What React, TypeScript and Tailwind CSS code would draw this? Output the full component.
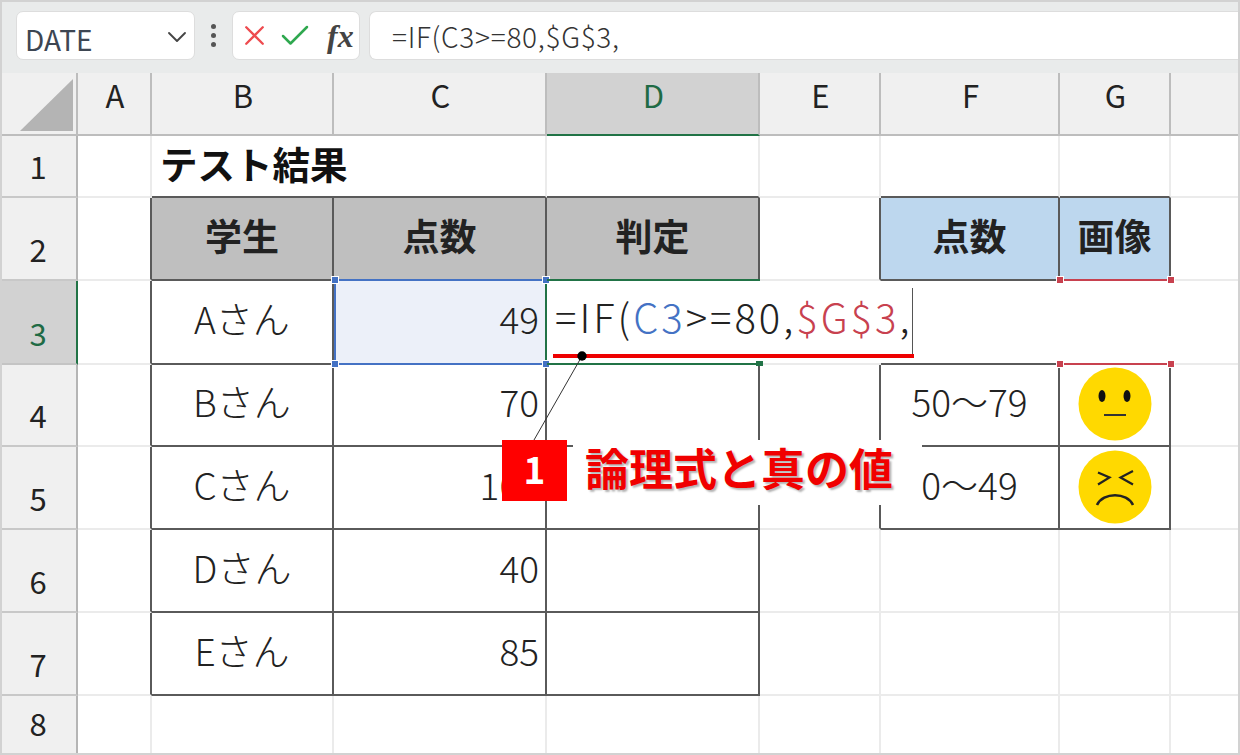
import type { ReactNode } from "react";
import { ChevronDown, Check, X } from "lucide-react";

const LIGHT = "border-r-2 border-b-2 border-[#ebebeb]";
const DARK = "border-r-2 border-b-2 border-[#5a5a5a]";
const BODY = "font-light pb-[6px]";

function ColHead({ label, active }: { label: string; active?: boolean }) {
  return (
    <div
      className={`flex items-center justify-center pl-[2px] pb-[16px] text-[31px] border-r-2 border-b-2 ${
        active
          ? "bg-[#d2d2d2] text-[#1f6b45] border-r-[#bdbdbd] border-b-[#217346]"
          : "bg-[#f0f0f0] text-[#222] border-[#bdbdbd]"
      }`}
    >
      {label}
    </div>
  );
}

function RowHead({ label, active }: { label: string; active?: boolean }) {
  return (
    <div
      className={`flex items-end justify-center pb-[10px] text-[31px] leading-[40px] border-b-2 border-r-2 ${
        active
          ? "bg-[#d2d2d2] text-[#1f6b45] border-b-[#c4c4c4] border-r-[#217346]"
          : "bg-[#f0f0f0] text-[#222] border-b-[#c8c8c8] border-r-[#b5b5b5]"
      }`}
    >
      {label}
    </div>
  );
}

function Cell({ className = LIGHT, children }: { className?: string; children?: ReactNode }) {
  return <div className={`flex items-center text-[37px] text-[#222] ${className}`}>{children}</div>;
}

function Handle({ className }: { className: string }) {
  return <span className={`absolute w-[8px] h-[8px] border border-white ${className}`} />;
}

function NeutralFace() {
  return (
    <svg className="-mt-[2px]" width="76" height="74" viewBox="0 0 76 74">
      <circle cx="38" cy="37" r="36.5" fill="#ffd900" />
      <ellipse cx="25" cy="29" rx="3.5" ry="6" fill="#111" />
      <ellipse cx="50" cy="29" rx="3.5" ry="6" fill="#111" />
      <path d="M27 48 H49" stroke="#333" strokeWidth="2" />
    </svg>
  );
}

function SadFace() {
  return (
    <svg className="-mt-[2px]" width="76" height="74" viewBox="0 0 76 74">
      <circle cx="38" cy="37" r="36.5" fill="#ffd900" />
      <path d="M21 22.5 L32.5 27.5 L21 34.5" fill="none" stroke="#222" strokeWidth="2.2" />
      <path d="M56 21 L43.5 27.5 L56 34.5" fill="none" stroke="#222" strokeWidth="2.2" />
      <path d="M20 55 C26 42 50 42 56 55" fill="none" stroke="#222" strokeWidth="2.6" />
    </svg>
  );
}

const rows = [
  { no: "4", name: "Bさん", score: "70", range: "50〜79", face: <NeutralFace /> },
  { no: "5", name: "Cさん", score: "100", range: "0〜49", face: <SadFace /> },
  { no: "6", name: "Dさん", score: "40" },
  { no: "7", name: "Eさん", score: "85" },
];

export default function App() {
  return (
    <div
      className="relative w-[1240px] h-[755px] overflow-hidden bg-white"
      style={{ fontFamily: '"Noto Sans CJK JP", "Noto Sans", sans-serif' }}
    >
      {/* formula bar */}
      <div className="flex h-[73px] items-center gap-[9px] pl-[16px] pb-[2px] bg-[#e9ebeb]">
        <div className="flex w-[179px] h-[49px] items-center justify-between pl-[8px] pr-[1px] bg-white rounded-[7px] border border-[#dddddd] text-[28px] text-[#3d4652]">
          <span className="pt-[6px]">DATE</span>
          <ChevronDown size={32} strokeWidth={1.4} color="#444" className="mt-[3px]" />
        </div>
        <div className="flex flex-col gap-[4px] w-[10px] ml-[4px] mr-[5px] items-center">
          <span className="w-[5px] h-[5px] rounded-full bg-[#555]" />
          <span className="w-[5px] h-[5px] rounded-full bg-[#555]" />
          <span className="w-[5px] h-[5px] rounded-full bg-[#555]" />
        </div>
        <div className="flex w-[128px] h-[49px] items-center pl-[5px] bg-white rounded-[7px] border border-[#dddddd]">
          <X size={33} strokeWidth={1.7} color="#ee4b4f" />
          <Check size={36} strokeWidth={1.7} color="#2fa84f" className="ml-[6px]" />
          <span
            className="ml-[14px] text-[32px] font-bold italic text-[#444]"
            style={{ fontFamily: '"Liberation Serif", serif' }}
          >
            fx
          </span>
        </div>
        <div className="flex flex-1 h-[49px] items-center pl-[22px] bg-white rounded-l-[7px] border border-r-0 border-[#dddddd] text-[28px] tracking-[0.7px] font-light text-[#333]">
          =IF(C3&gt;=80,$G$3,
        </div>
      </div>

      {/* sheet */}
      <div className="grid grid-cols-[78px_74px_182px_213px_213px_121px_179px_111px_69px] grid-rows-[63px_62px_83px_84px_82px_83px_83px_83px_59px]">
        <div className="flex items-end justify-end pr-[2px] pb-[3px] bg-[#f0f0f0] border-r-2 border-b-2 border-[#bdbdbd]">
          <svg width="54" height="52" viewBox="0 0 54 52">
            <path d="M53 0 V52 H0 Z" fill="#b4b4b4" />
          </svg>
        </div>
        <ColHead label="A" />
        <ColHead label="B" />
        <ColHead label="C" />
        <ColHead label="D" active />
        <ColHead label="E" />
        <ColHead label="F" />
        <ColHead label="G" />
        <div className="bg-[#f0f0f0] border-b-2 border-[#bdbdbd]" />

        {/* row 1 */}
        <RowHead label="1" />
        <Cell />
        <Cell className="border-b-2 border-b-[#5a5a5a]">
          <span className="pl-[8px] pb-[6px] whitespace-nowrap font-bold text-[37.5px] leading-[48px] text-[#111]">テスト結果</span>
        </Cell>
        <Cell className="border-r-2 border-r-[#ebebeb] border-b-2 border-b-[#5a5a5a]" />
        <Cell className="border-r-2 border-r-[#ebebeb] border-b-2 border-b-[#5a5a5a]" />
        <Cell />
        <Cell className="border-r-2 border-r-[#ebebeb] border-b-2 border-b-[#5a5a5a]" />
        <Cell className="border-r-2 border-r-[#ebebeb] border-b-2 border-b-[#5a5a5a]" />
        <Cell className="border-b-2 border-[#ebebeb]" />

        {/* row 2 */}
        <RowHead label="2" />
        <Cell className="border-r-2 border-r-[#5a5a5a] border-b-2 border-b-[#ebebeb]" />
        {["学生", "点数", "判定"].map((t) => (
          <Cell key={t} className={`${DARK} justify-center pb-[6px] bg-[#bfbfbf] font-bold text-[36px] text-[#111]`}>
            {t}
          </Cell>
        ))}
        <Cell className="border-r-2 border-r-[#5a5a5a] border-b-2 border-b-[#ebebeb]" />
        <Cell className={`${DARK} justify-center pb-[6px] bg-[#bdd7ee] font-bold text-[36px] text-[#111]`}>点数</Cell>
        <Cell className={`${DARK} justify-center pb-[6px] bg-[#bdd7ee] font-bold text-[36px] text-[#111]`}>画像</Cell>
        <Cell className="border-b-2 border-[#ebebeb]" />

        {/* row 3, with the cell being edited */}
        <RowHead label="3" active />
        <Cell className="border-r-2 border-r-[#5a5a5a] border-b-2 border-b-[#ebebeb]" />
        <Cell className={`${DARK} ${BODY} justify-center`}>Aさん</Cell>
        <div className="relative flex items-center justify-end pr-[6px] pb-[6px] -mt-[2px] bg-[#ecf0f9] border-2 border-[#4472c4] border-r-[#217346] font-light text-[37px] text-[#222]">
          49
          <Handle className="-left-[5px] -top-[5px] bg-[#4472c4]" />
          <Handle className="-right-[5px] -top-[5px] bg-[#4472c4]" />
          <Handle className="-left-[5px] -bottom-[5px] bg-[#4472c4]" />
          <Handle className="-right-[5px] -bottom-[5px] bg-[#4472c4]" />
        </div>
        <div className="relative -mt-[2px] border-y-2 border-[#217346]">
          <div className="absolute right-[-3px] bottom-[-3px] w-[7px] h-[5px] bg-[#217346]" />
        </div>
        <Cell className="border-b-2 border-[#ebebeb]" />
        <Cell className="border-b-2 border-[#5a5a5a]" />
        <div className="relative -mt-[2px] border-y-2 border-[#c8414f]">
          <Handle className="-left-[4px] -top-[5px] bg-[#c8414f]" />
          <Handle className="-right-[4px] -top-[5px] bg-[#c8414f]" />
          <Handle className="-left-[4px] -bottom-[5px] bg-[#c8414f]" />
          <Handle className="-right-[4px] -bottom-[5px] bg-[#c8414f]" />
        </div>
        <Cell className="border-b-2 border-[#ebebeb]" />

        {/* rows 4 to 7 */}
        {rows.map((r) => (
          <div key={r.no} className="contents">
            <RowHead label={r.no} />
            <Cell className="border-r-2 border-r-[#5a5a5a] border-b-2 border-b-[#ebebeb]" />
            <Cell className={`${DARK} ${BODY} justify-center`}>{r.name}</Cell>
            <Cell className={`${DARK} ${BODY} justify-end pr-[6px]`}>{r.score}</Cell>
            <Cell className={DARK} />
            <Cell className={`border-b-2 border-b-[#ebebeb] border-r-2 ${r.range ? "border-r-[#5a5a5a]" : "border-r-[#ebebeb]"}`} />
            {r.range ? (
              <>
                <Cell className={`${DARK} ${BODY} justify-center`}>{r.range}</Cell>
                <Cell className={`${DARK} justify-center`}>{r.face}</Cell>
              </>
            ) : (
              <>
                <Cell />
                <Cell />
              </>
            )}
            <Cell className="border-b-2 border-[#ebebeb]" />
          </div>
        ))}

        {/* row 8 */}
        <RowHead label="8" />
        <Cell className="border-r-2 border-[#ebebeb]" />
        <Cell className="border-r-2 border-[#ebebeb]" />
        <Cell className="border-r-2 border-[#ebebeb]" />
        <Cell className="border-r-2 border-[#ebebeb]" />
        <Cell className="border-r-2 border-[#ebebeb]" />
        <Cell className="border-r-2 border-[#ebebeb]" />
        <Cell className="border-r-2 border-[#ebebeb]" />
        <Cell />
      </div>

      {/* in-cell formula, spills over E to G */}
      <div className="absolute left-[548px] top-[283px] w-[365px] h-[72px] flex items-center pl-[7px] pb-[6px] whitespace-nowrap bg-white font-light text-[40px] tracking-[3px] text-[#222]">
        =IF(<span className="text-[#4472c4]">C3</span>&gt;=80,<span className="text-[#c8414f]">$G$3</span>,
        <span className="absolute right-0 top-[5px] bottom-0 w-[1.5px] bg-[#555]" />
      </div>

      {/* callout */}
      <div className="absolute left-[553px] top-[354px] w-[361px] h-[4px] bg-[#ee0000]" />
      <svg className="absolute left-[528px] top-[348px]" width="62" height="96" viewBox="0 0 62 96">
        <path d="M6 92 L54 8" stroke="#333" strokeWidth="1" />
        <circle cx="54" cy="8" r="4.7" fill="#000" />
      </svg>
      <div className="absolute left-[502px] top-[440px] flex w-[65px] h-[61px] pb-[4px] items-center justify-center bg-[#ff0000] text-white font-bold text-[37px]">
        1
      </div>
      <div className="absolute left-[573px] top-[440px] flex w-[349px] h-[65px] items-start pl-[12px] bg-white">
        <span
          className="whitespace-nowrap text-[#f00000] font-bold text-[44px] leading-[54px]"
          style={{ textShadow: "2px 2px 2px rgba(0,0,0,0.3)" }}
        >
          論理式と真の値
        </span>
      </div>

      <div className="pointer-events-none absolute inset-0 border-2 border-[#d2d2d2]" />
    </div>
  );
}
